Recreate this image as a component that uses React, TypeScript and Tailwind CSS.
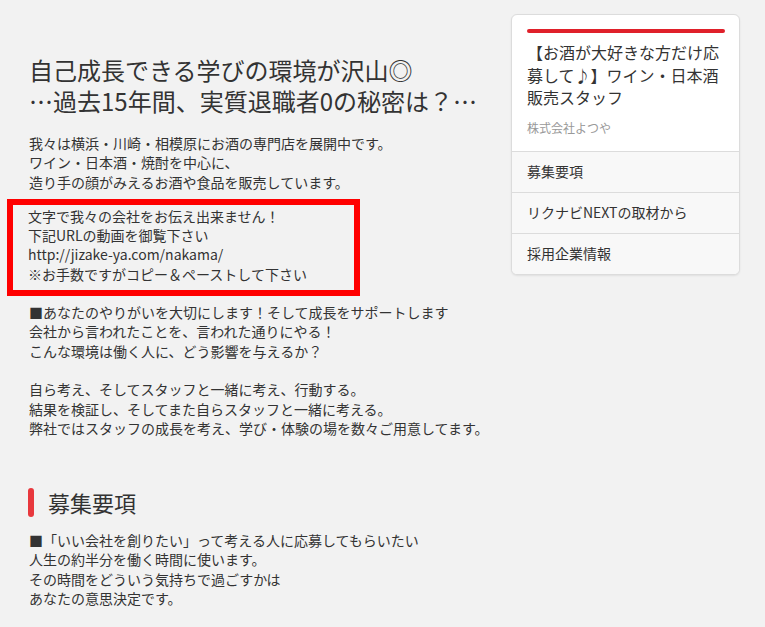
const font = { fontFamily: '"Noto Sans CJK JP", "Noto Sans", sans-serif' };

const menu = ['募集要項', 'リクナビNEXTの取材から', '採用企業情報'];

function Lines({ lines }: { lines: string[] }) {
  return (
    <p className="text-[14px] leading-[19.3px] text-[#333]">
      {lines.map((l, i) => (
        <span key={i} className="block min-h-[19.3px]">
          {l}
        </span>
      ))}
    </p>
  );
}

function SideCard() {
  return (
    <aside className="mt-[14px] w-[229px] shrink-0 self-start overflow-hidden rounded-[6px] border border-[#dcdcdc] bg-white shadow-[0_1px_2px_rgba(0,0,0,0.08)]">
      <div className="px-[15px] pt-[14px] pb-[14px]">
        <div className="h-[4px] w-[198px] rounded-full bg-[#e0202a]" />
        <h2 className="mt-[8px] text-[16px] leading-[22.5px] text-[#333]">
          【お酒が大好きな方だけ応募して♪】ワイン・日本酒販売スタッフ
        </h2>
        <p className="mt-[10px] text-[12px] leading-[18px] text-[#999]">株式会社よつや</p>
      </div>
      <ul className="bg-[#f8f8f8]">
        {menu.map((m) => (
          <li
            key={m}
            className="flex h-[41px] items-center border-t border-[#dcdcdc] px-[15px] text-[14px] text-[#333]"
          >
            {m}
          </li>
        ))}
      </ul>
    </aside>
  );
}

export default function App() {
  return (
    <div className="min-h-[627px] w-full bg-[#f2f2f2]" style={font}>
      <div className="flex pl-[29px] pr-[25px]">
        <main className="flex-1 pt-[54px]">
          <h1 className="text-[24px] text-[#333]">
            <span className="block h-[31px] leading-[31px]">自己成長できる学びの環境が沢山◎</span>
            <span className="block h-[31px] leading-[31px]">…過去15年間、実質退職者0の秘密は？…</span>
          </h1>

          <div className="mt-[18px]">
            <Lines
              lines={[
                '我々は横浜・川崎・相模原にお酒の専門店を展開中です。',
                'ワイン・日本酒・焼酎を中心に、',
                '造り手の顔がみえるお酒や食品を販売しています。',
              ]}
            />
          </div>

          <div className="-ml-[22px] mt-[7px] w-[353px] border-[6px] border-[#ff0000] pt-[2px] pb-[6px] pl-[15px]">
            <Lines
              lines={[
                '文字で我々の会社をお伝え出来ません！',
                '下記URLの動画を御覧下さい',
                'http://jizake-ya.com/nakama/',
                '※お手数ですがコピー＆ペーストして下さい',
              ]}
            />
          </div>

          <div className="mt-[7px]">
            <Lines
              lines={[
                '■あなたのやりがいを大切にします！そして成長をサポートします',
                '会社から言われたことを、言われた通りにやる！',
                'こんな環境は働く人に、どう影響を与えるか？',
                '',
                '自ら考え、そしてスタッフと一緒に考え、行動する。',
                '結果を検証し、そしてまた自らスタッフと一緒に考える。',
                '弊社ではスタッフの成長を考え、学び・体験の場を数々ご用意してます。',
              ]}
            />
          </div>

          <div className="mt-[50px] flex items-center gap-[14px] -ml-[1px]">
            <span className="h-[29px] w-[6px] rounded-full bg-[#e8383d]" />
            <h2 className="text-[22px] leading-[29px] text-[#333]">募集要項</h2>
          </div>

          <div className="mt-[14px]">
            <Lines
              lines={[
                '■「いい会社を創りたい」って考える人に応募してもらいたい',
                '人生の約半分を働く時間に使います。',
                'その時間をどういう気持ちで過ごすかは',
                'あなたの意思決定です。',
              ]}
            />
          </div>
        </main>
        <SideCard />
      </div>
    </div>
  );
}
